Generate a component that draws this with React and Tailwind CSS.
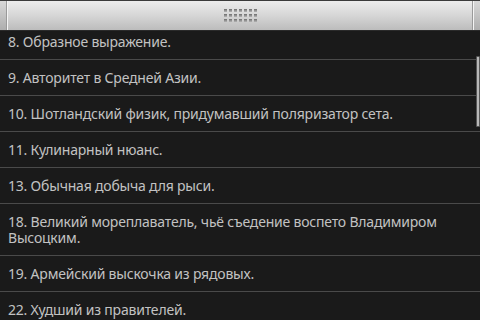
const items = [
  "8. Образное выражение.",
  "9. Авторитет в Средней Азии.",
  "10. Шотландский физик, придумавший поляризатор сета.",
  "11. Кулинарный нюанс.",
  "13. Обычная добыча для рыси.",
  "18. Великий мореплаватель, чьё съедение воспето Владимиром Высоцким.",
  "19. Армейский выскочка из рядовых.",
  "22. Худший из правителей.",
];

function Grip() {
  const dots = Array.from({ length: 21 });
  return (
    <div className="grid grid-cols-7 gap-x-[2px] gap-y-[2px]">
      {dots.map((_, i) => (
        <div
          key={i}
          className="h-[3px] w-[3px] bg-gradient-to-b from-[#6e6e6e] to-[#b4b4b4]"
        />
      ))}
    </div>
  );
}

function Handle() {
  return (
    <div className="flex h-[31px] flex-col bg-[#1a1a1a]">
      <div className="h-px bg-[#3a3a3a]" />
      <div className="flex h-[29px] bg-gradient-to-b from-[#ececec] via-[#d6d6d6] to-[#bcbcbc]">
        <div className="w-[6px] bg-gradient-to-b from-[#d8d8d8] to-[#aeaeae]" />
        <div className="w-px bg-[#9a9a9a]" />
        <div className="w-px bg-[#f4f4f4]" />
        <div className="flex flex-1 items-center justify-center pb-[1px]">
          <Grip />
        </div>
        <div className="w-px bg-[#9a9a9a]" />
        <div className="w-px bg-[#f4f4f4]" />
        <div className="w-[6px] bg-gradient-to-b from-[#d8d8d8] to-[#aeaeae]" />
      </div>
      <div className="h-px bg-[#2a2a2a]" />
    </div>
  );
}

export default function App() {
  return (
    <div
      className="flex h-[320px] w-[480px] flex-col overflow-hidden bg-[#1a1a1a]"
      style={{ fontFamily: '"Noto Sans", "Open Sans", sans-serif' }}
    >
      <Handle />
      <div className="relative flex-1 overflow-hidden">
        <div className="-mt-[7px] flex flex-col">
          {items.map((t) => (
            <div
              key={t}
              className="border-b border-[#4a4a4a] pb-[9px] pl-[8px] pr-[14px] pt-[10px] text-[14px] leading-[16px] tracking-[-0.2px] text-[#c2c2c2]"
            >
              {t}
            </div>
          ))}
        </div>
        <div className="absolute right-0 top-[25px] h-[71px] w-[4px] rounded-[1px] border border-[#555] bg-[#b8b8b8]" />
      </div>
    </div>
  );
}
